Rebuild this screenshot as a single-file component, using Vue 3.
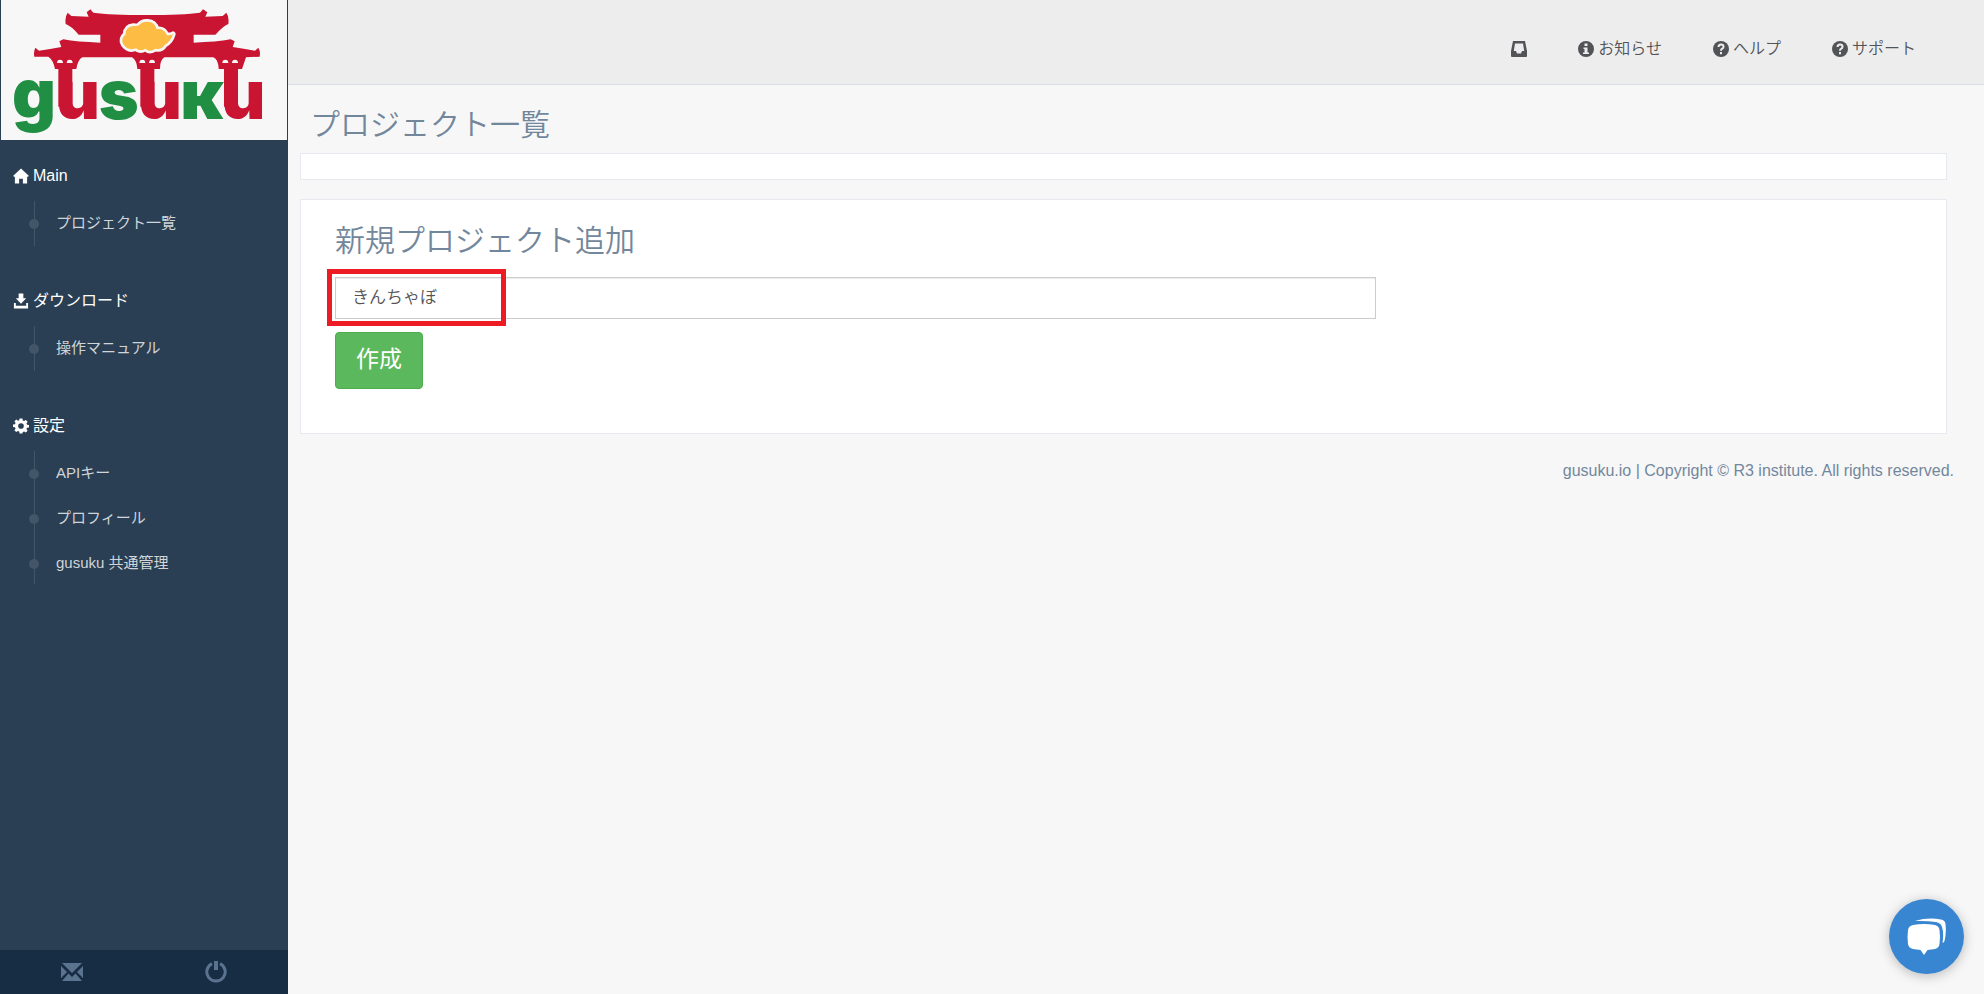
<script setup>
  import {ref} from "vue";

  const projectName = ref('きんちゃぼ')

  //サイドメニュー
  const menus = [
    {title: 'Main', icon: 'home', items: ['プロジェクト一覧']},
    {title: 'ダウンロード', icon: 'download', items: ['操作マニュアル']},
    {title: '設定', icon: 'cog', items: ['APIキー', 'プロフィール', 'gusuku 共通管理']}
  ]

  //上部ナビ
  const navs = [
    {title: 'お知らせ', icon: 'info'},
    {title: 'ヘルプ', icon: 'question'},
    {title: 'サポート', icon: 'question'}
  ]

  function createProject() {
    projectName.value = projectName.value.trim()
  }
</script>

<template>
  <div class="page">
    <aside class="sidebar">
      <a href="#" class="logo" aria-label="gusuku">
        <svg viewBox="3 0 858 420">
          <g fill="#c91432">
            <path d="M271 28 L280 38 Q330 45 440 45 Q550 45 600 38 L609 28 L622 37 L616 50 L668 48 L679 38 Q688 50 685 72 Q672 76 646 104 L581 104 L581 128 Q650 126 692 118 L704 124 L698 141 Q730 146 765 152 L775 143 Q782 154 779 170 L738 172 L726 207 L656 207 Q655 178 640 172 L493 172 Q480 180 480 207 L412 207 Q410 180 396 172 L247 172 Q234 178 229 207 L165 207 Q160 180 145 170 L103 170 Q100 154 106 143 L117 152 Q150 147 184 141 L178 124 L190 118 Q230 126 301 128 L301 104 L236 104 Q214 78 197 72 Q194 50 203 38 L214 48 L266 50 L260 37 Z" />
            <path d="M175 200h42v120h-42z M421 200h42v120h-42z M672 200h42v120h-42z" />
          </g>
          <path fill="#f7f7f7" d="M171 189a8 9 0 0 1 18 0z M200 189a8 9 0 0 1 18 0z M418 189a8 9 0 0 1 18 0z M447 189a8 9 0 0 1 18 0z M667 189a8 9 0 0 1 18 0z M696 189a8 9 0 0 1 18 0z" />
          <path fill="#fdbc43" stroke="#f7f7f7" stroke-width="16" paint-order="stroke" stroke-linejoin="round" d="M370 133 Q361 116 376 104 Q377 80 400 78 Q413 79 417 76 Q425 64 443 65 Q465 66 470 88 Q490 84 500 104 Q508 108 519 102 Q513 124 494 135 Q484 151 466 146 Q450 158 436 146 Q419 156 408 145 Q384 154 370 133 Z" />
          <g class="logo-text">
            <text x="36" y="355" fill="#208e43">g</text>
            <text x="167" y="357" fill="#c91432">u</text>
            <text x="296" y="357" fill="#208e43">s</text>
            <text x="413" y="357" fill="#c91432">u</text>
            <text x="541" y="357" fill="#208e43">ĸ</text>
            <text x="664" y="357" fill="#c91432">u</text>
          </g>
        </svg>
      </a>

      <nav class="menu">
        <section v-for="menu in menus" :key="menu.title" class="menu-section">
          <h3>
            <svg v-if="menu.icon === 'home'" class="icon" viewBox="0 0 17 16"><path d="M8.500 0 L17 8 L15 9 V16 H10.500 V11 H6.500 V16 H2 V9 L0 8 Z" /></svg>
            <svg v-else-if="menu.icon === 'download'" class="icon" viewBox="0 0 17 16"><path d="M6 0h5v5h3l-5.500 6L3 5h3z M1 10h2v3h11v-3h2v6H1z" /></svg>
            <svg v-else class="icon" viewBox="0 0 17 16"><path fill-rule="evenodd" d="M7 0h3l.4 2.200 1.400.6L13.600 1.500l2 2-1.300 1.800.6 1.400L17 7v2.500l-2.100.4-.6 1.400 1.200 1.800-1.900 1.900-1.800-1.200-1.400.6L10 16H7l-.4-2.100-1.400-.6L3.400 14.500 1.500 12.600l1.200-1.800-.6-1.400L0 9V6.500l2.100-.4.6-1.400L1.500 3l2-1.800 1.800 1.200L6.600 2z M8.500 5a3 3 0 1 0 0 6a3 3 0 0 0 0-6z" /></svg>
            <span>{{ menu.title }}</span>
          </h3>
          <ul>
            <li v-for="item in menu.items" :key="item"><a href="#">{{ item }}</a></li>
          </ul>
        </section>
      </nav>

      <div class="sidebar-footer">
        <a href="#" aria-label="メール">
          <svg viewBox="0 0 22 18"><path d="M1 0h20L11 10z M0 3l6 6-6 6z M22 3v12l-6-6z M1 18l6.500-7.500L11 14l3.500-3.500L21 18z" /></svg>
        </a>
        <a href="#" aria-label="ログアウト">
          <svg viewBox="0 0 22 22"><path d="M9 0h4v9H9z" /><path class="ring" d="M7 2.600a9.200 9.200 0 1 0 8 0" /></svg>
        </a>
      </div>
    </aside>

    <div class="main">
      <header class="top-nav">
        <a href="#" aria-label="受信箱">
          <svg class="icon" viewBox="0 0 16 16"><path fill-rule="evenodd" d="M2 0h12l2 10v5q0 1-1 1H1q-1 0-1-1v-5z M4 2.500L2.800 10H5l1 2.500h4l1-2.500h2.200L12 2.500z" /></svg>
        </a>
        <a v-for="nav in navs" :key="nav.title" href="#">
          <svg v-if="nav.icon === 'info'" class="icon" viewBox="0 0 16 16"><path fill-rule="evenodd" d="M8 0a8 8 0 1 0 0 16a8 8 0 0 0 0-16z M6.500 2.500h3v2.500h-3z M5.500 6.500h4v5h1.500v1.500h-6v-1.500h1.500v-3.500h-1z" /></svg>
          <svg v-else class="icon" viewBox="0 0 16 16"><circle cx="8" cy="8" r="8" /><path class="mark" d="M5.500 6q0-2.500 2.500-2.500t2.500 2.200q0 1.300-1.300 2T8 9.800M8 11v2.200" /></svg>
          <span>{{ nav.title }}</span>
        </a>
      </header>

      <main class="content">
        <h1>プロジェクト一覧</h1>
        <div class="panel panel-empty"></div>
        <div class="panel panel-form">
          <h2><label for="projectName">新規プロジェクト追加</label></h2>
          <form @submit.prevent="createProject">
            <div class="field">
              <input id="projectName" v-model="projectName" type="text">
              <div class="highlight"></div>
            </div>
            <button type="submit">作成</button>
          </form>
        </div>
      </main>

      <footer>gusuku.io | Copyright © R3 institute. All rights reserved.</footer>
    </div>

    <button class="chat" type="button" aria-label="チャット">
      <svg viewBox="0 0 40 38"><path d="M6 7 Q17 5 28 7 Q32 8 32.500 12 Q33.500 19 32.500 26 Q32 30 28 31 L20.500 32 L17 37 L13.500 32 L6 31 Q1.500 30 1 26 Q0 19 1 12 Q1.500 8 6 7 Z" /><path d="M8 3 Q21-1 34 1.500 Q38 2 38.500 6 Q39.500 15 37.500 23 Q37 24.500 35.500 25 Q37 15 35 9 Q34 5 29 4 Q19 2.500 8 3 Z" /></svg>
    </button>
  </div>
</template>

<style>
  body {
    margin: 0;
    background-color: #f7f7f7;
  }
</style>

<style scoped>
  .page {
    display: flex;
    min-height: 100vh;
    color: #73879c;
    font-family: "Liberation Sans", "Noto Sans CJK JP", sans-serif;
    font-size: 16px;
    line-height: 24px;
  }

  a {
    color: inherit;
    text-decoration: none;
  }

  .icon {
    width: 16px;
    height: 16px;
    fill: currentColor;
  }

  /* サイドバー */
  .sidebar {
    display: flex;
    flex-direction: column;
    flex: none;
    width: 288px;
    background-color: #2a3f54;
  }

  .logo {
    display: block;
    margin: 0 1px;
    background-color: #f7f7f7;
  }

  .logo svg {
    display: block;
    width: 100%;
  }

  .logo-text {
    font-family: Inter, "Liberation Sans", sans-serif;
    font-size: 204px;
    font-weight: 900;
  }

  .menu {
    flex: 1;
    padding-top: 11px;
  }

  .menu-section {
    margin-bottom: 30px;
  }

  .menu-section h3 {
    display: flex;
    align-items: center;
    gap: 4px;
    height: 50px;
    margin: 0;
    padding-left: 13px;
    color: #ffffff;
    font-size: 16px;
    font-weight: 400;
  }

  .menu-section ul {
    margin: 0;
    padding: 0;
    list-style: none;
  }

  .menu-section li {
    position: relative;
    height: 45px;
    padding-left: 56px;
    color: #d0d5d9;
    font-size: 15px;
    line-height: 44px;
  }

  .menu-section li::before {
    content: "";
    position: absolute;
    left: 34px;
    top: 0;
    bottom: 0;
    width: 1px;
    background-color: #425668;
  }

  .menu-section li:last-child:not(:first-child)::before {
    bottom: 2px;
  }

  .menu-section li::after {
    content: "";
    position: absolute;
    left: 29px;
    top: 18px;
    width: 10px;
    height: 10px;
    border-radius: 50%;
    background-color: #425668;
  }

  .sidebar-footer {
    display: flex;
    height: 44px;
    background-color: #172d44;
  }

  .sidebar-footer a {
    display: flex;
    flex: 1;
    align-items: center;
    justify-content: center;
  }

  .sidebar-footer svg {
    width: 22px;
    fill: #5a738e;
  }

  .sidebar-footer .ring {
    fill: none;
    stroke: #5a738e;
    stroke-width: 3;
  }

  /* メイン */
  .main {
    flex: 1;
    min-width: 0;
  }

  .top-nav {
    display: flex;
    align-items: center;
    justify-content: flex-end;
    gap: 51px;
    height: 84px;
    padding: 0 68px;
    border-bottom: 1px solid #d9dee4;
    background-color: #ededed;
    color: #515356;
  }

  .top-nav a {
    display: flex;
    align-items: center;
    gap: 4px;
    padding-top: 13px;
    font-weight: 350;
  }

  .top-nav .mark {
    fill: none;
    stroke: #ededed;
    stroke-width: 2;
  }

  .content {
    padding: 18px 37px 0 12px;
  }

  .content h1,
  .content h2 {
    margin: 0;
    font-size: 30px;
    font-weight: 350;
    line-height: 44px;
  }

  .content h1 {
    margin-bottom: 6px;
    padding-left: 10px;
  }

  .panel {
    border: 1px solid #e6e9ed;
    background-color: #ffffff;
  }

  .panel-empty {
    height: 25px;
    margin-bottom: 19px;
  }

  .panel-form {
    padding: 19px 34px 44px;
  }

  .panel-form form {
    display: flex;
    flex-direction: column;
    align-items: flex-start;
    gap: 13px;
    padding-top: 14px;
  }

  .field {
    position: relative;
    width: 66%;
  }

  .field input {
    display: block;
    width: 100%;
    height: 42px;
    padding: 0 16px 5px;
    border: 1px solid #cccccc;
    background-color: #ffffff;
    box-shadow: inset 0 1px 1px rgba(0, 0, 0, 0.08);
    box-sizing: border-box;
    color: #555555;
    font-family: inherit;
    font-size: 17px;
    font-weight: 350;
  }

  .highlight {
    position: absolute;
    left: -8px;
    top: -8px;
    width: 169px;
    height: 47px;
    border: 5px solid #ed1c24;
    pointer-events: none;
  }

  form button {
    height: 57px;
    padding: 0 20px 8px;
    border: 1px solid #4cae4c;
    border-radius: 4px;
    background-color: #5cb85c;
    color: #ffffff;
    font-family: inherit;
    font-size: 23px;
    cursor: pointer;
  }

  footer {
    padding: 25px 30px;
    text-align: right;
  }

  .chat {
    position: fixed;
    right: 20px;
    bottom: 20px;
    display: flex;
    align-items: center;
    justify-content: center;
    width: 75px;
    height: 75px;
    padding: 0;
    border: none;
    border-radius: 50%;
    background-color: #3886d1;
    box-shadow: 0 2px 12px rgba(0, 0, 0, 0.25);
    cursor: pointer;
  }

  .chat svg {
    width: 40px;
    fill: #ffffff;
  }
</style>
